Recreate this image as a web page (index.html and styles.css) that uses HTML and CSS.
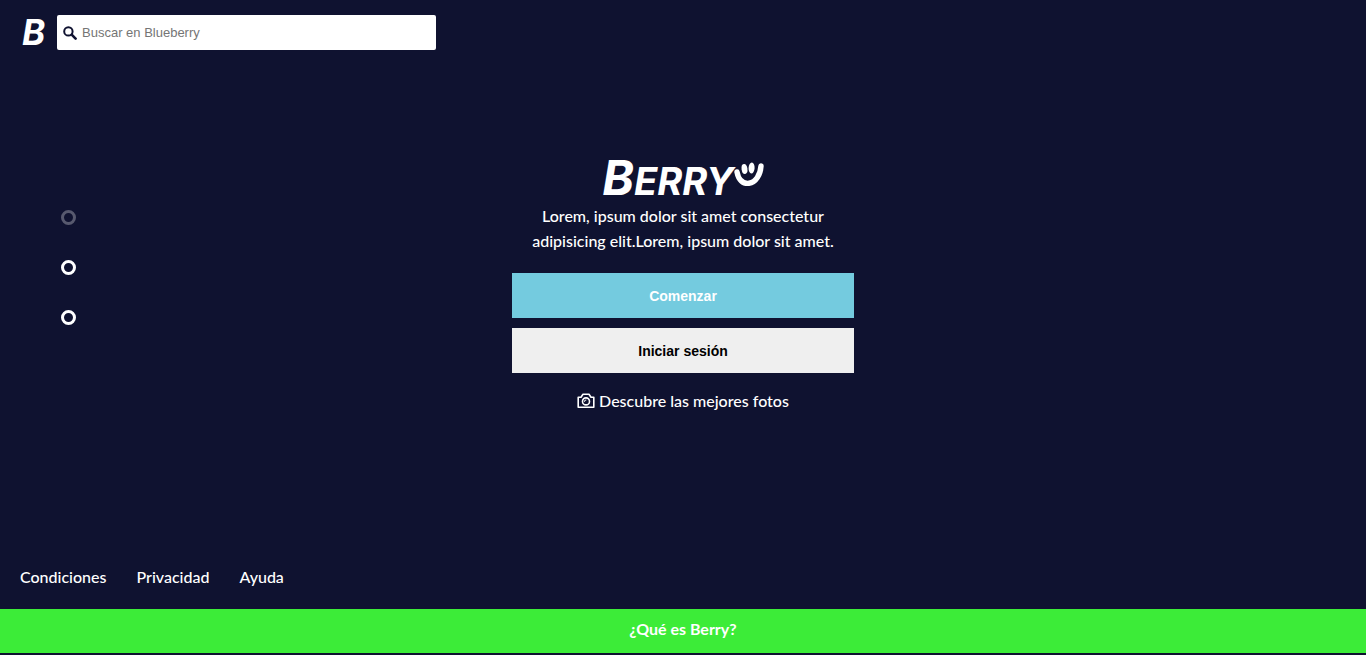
FILE: index.html
```html
<!DOCTYPE html>
<html lang="es">
<head>
<meta charset="utf-8">
<meta name="viewport" content="width=device-width, initial-scale=1">
<title>Berry</title>
<link rel="stylesheet" href="styles.css">
</head>
<body>
<header class="topbar">
  <a class="brand" href="#" aria-label="Berry, inicio">B</a>
  <form class="search" role="search">
    <svg class="search-icon" viewBox="0 0 14 14" aria-hidden="true"><circle cx="5.4" cy="5.4" r="4.2" fill="none" stroke="currentColor" stroke-width="2"/><path d="M8.7 8.7l3.9 3.9" stroke="currentColor" stroke-width="2.6" stroke-linecap="round"/></svg>
    <input class="search-input" type="search" placeholder="Buscar en Blueberry" aria-label="Buscar en Blueberry">
  </form>
</header>
<main class="hero">
  <nav class="dots" aria-label="Secciones">
    <button class="dot dot-current" type="button" aria-label="Sección 1"></button>
    <button class="dot" type="button" aria-label="Sección 2"></button>
    <button class="dot" type="button" aria-label="Sección 3"></button>
  </nav>
  <section class="welcome">
    <h1 class="logo"><span>B<span class="logo-rest">erry</span></span><svg class="smile" viewBox="0 0 30 25" aria-hidden="true"><path d="M3 10C4.500 18 9 22 15 21.300C21.800 20.500 26.500 12.500 27 4" fill="none" stroke="currentColor" stroke-width="5.400" stroke-linecap="round"/><ellipse cx="10.500" cy="7" rx="2.900" ry="5" transform="rotate(-8 10.500 7)" fill="currentColor"/><ellipse cx="17.600" cy="6" rx="3" ry="5.600" transform="rotate(3 17.600 6)" fill="currentColor"/></svg></h1>
    <p class="intro">Lorem, ipsum dolor sit amet consectetur<br>adipisicing elit.Lorem, ipsum dolor sit amet.</p>
    <button class="button button-primary" type="button">Comenzar</button>
    <button class="button" type="button">Iniciar sesión</button>
    <a class="discover" href="#"><svg class="camera" viewBox="0 0 18 16" fill="none" stroke="currentColor" aria-hidden="true"><path d="M1.200 4.200H4L6 1.200h6l2 3h2.800v10H1.200z" stroke-width="1.600" stroke-linejoin="round"/><circle cx="9" cy="8.400" r="3.500" stroke-width="1.600"/><path d="M7.500 8.800a1.600 1.600 0 0 1 1.800-1.800"/></svg>Descubre las mejores fotos</a>
  </section>
</main>
<footer>
  <nav class="legal" aria-label="Legal">
    <a href="#">Condiciones</a>
    <a href="#">Privacidad</a>
    <a href="#">Ayuda</a>
  </nav>
  <a class="about" href="#">¿Qué es Berry?</a>
</footer>
</body>
</html>
```
FILE: styles.css
```css
* { box-sizing: border-box; }
body {
  margin: 0;
  min-height: 100vh;
  display: flex;
  flex-direction: column;
  padding-bottom: 2px;
  background: #0f1230;
  color: #fff;
  font: 500 16px/25px Lato, sans-serif;
}
a { color: inherit; text-decoration: none; }
button { border: 0; cursor: pointer; }

.topbar { display: flex; align-items: center; gap: 10px; padding: 15px 20px; }
.brand {
  width: 27px;
  font: italic 700 35px/35px Inter, sans-serif;
  text-align: center;
}
.search {
  display: flex;
  align-items: center;
  gap: 5px;
  flex: 0 1 379px;
  height: 35px;
  padding: 0 6px;
  border-radius: 2px;
  background: #fff;
  color: #0f1230;
}
.search-icon { width: 14px; height: 14px; flex: none; }
.search-input {
  flex: 1;
  min-width: 0;
  padding: 0;
  border: 0;
  outline: 0;
  background: none;
  appearance: none;
  font: 13px "Liberation Sans", Arial, sans-serif;
}
.search-input::placeholder { color: #757575; }

.hero {
  flex: 1;
  display: grid;
  grid-template-columns: 1fr minmax(300px, 25%) 1fr;
  align-items: start;
  padding-top: 88px;
}
.dots { display: flex; flex-direction: column; gap: 35px; padding: 57px 0 0 61px; }
.dot {
  width: 15px;
  height: 15px;
  padding: 0;
  border: 3px solid #fff;
  border-radius: 50%;
  background: none;
}
.dot-current { opacity: 0.3; }

.welcome { display: flex; flex-direction: column; gap: 10px; text-align: center; }
.logo {
  display: flex;
  justify-content: center;
  margin: 0;
  font: italic 700 48px/50px Inter, sans-serif;
}
.logo-rest { font-size: 38px; line-height: 1; text-transform: uppercase; }
.smile { width: 30px; height: 25px; margin-top: 9px; }
.intro { margin: -10px 0 10px; white-space: nowrap; }
.button {
  height: 45px;
  background: #efefef;
  color: #000;
  font: bold 14px "Liberation Sans", Arial, sans-serif;
}
.button-primary { background: #74cbdf; color: #fff; }
.discover { display: flex; justify-content: center; align-items: center; gap: 4px; margin-top: 5px; }
.camera { width: 18px; height: 16px; }

.legal { display: flex; gap: 30px; padding: 0 20px 20px; }
.about { display: block; padding: 7px 0 12px; background: #3cec38; text-align: center; font-weight: 700; }
```
